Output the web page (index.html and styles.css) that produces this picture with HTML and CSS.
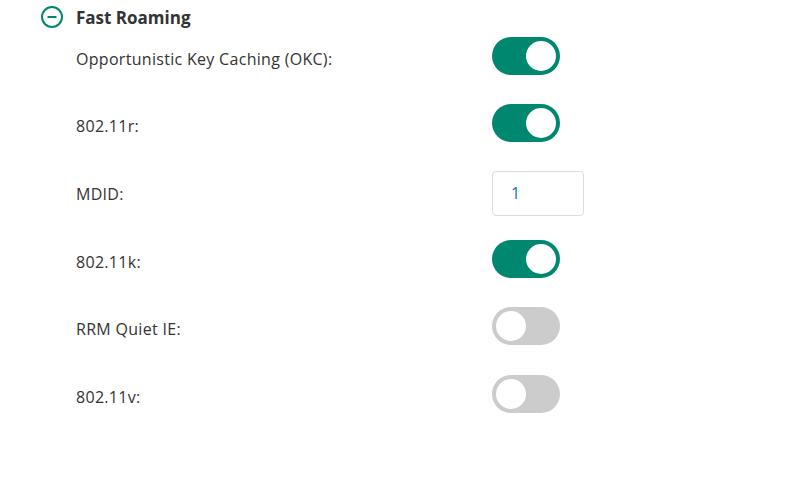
FILE: index.html
```html
<!DOCTYPE html>
<html lang="en">
<head>
  <meta charset="UTF-8" />
  <meta name="viewport" content="width=device-width, initial-scale=1.0" />
  <title>Fast Roaming</title>
  <link rel="stylesheet" href="styles.css">
</head>
<body>

  <!-- Section header -->
  <div class="section-head">
    <svg class="collapse-icon" width="24" height="24" viewBox="0 0 24 24">
      <circle cx="12" cy="12" r="10" fill="none" stroke="#00876f" stroke-width="2" />
      <line x1="7.5" y1="12" x2="16.5" y2="12" stroke="#00876f" stroke-width="2" />
    </svg>
    <span class="section-title">Fast Roaming</span>
  </div>

  <div class="rows">
    <div class="row">
      <label>Opportunistic Key Caching (OKC):</label>
      <span class="toggle on"><span class="knob"></span></span>
    </div>
    <div class="row">
      <label>802.11r:</label>
      <span class="toggle on"><span class="knob"></span></span>
    </div>
    <div class="row">
      <label>MDID:</label>
      <input type="text" value="1" class="field" />
    </div>
    <div class="row">
      <label>802.11k:</label>
      <span class="toggle on"><span class="knob"></span></span>
    </div>
    <div class="row">
      <label>RRM Quiet IE:</label>
      <span class="toggle"><span class="knob"></span></span>
    </div>
    <div class="row">
      <label>802.11v:</label>
      <span class="toggle"><span class="knob"></span></span>
    </div>
  </div>

</body>
</html>
```

FILE: styles.css
```css
body {
  margin: 0;
  font-family: "Open Sans", "Noto Sans", sans-serif;
  color: #333;
  background: #fff;
}
.section-head {
  display: flex;
  align-items: center;
  height: 34px;
  padding-left: 40px;
}
.collapse-icon {
  display: block;
}
.section-title {
  margin-left: 12px;
  font-size: 17px;
  font-weight: 700;
  color: #333;
}
.rows {
  margin-top: -12px;
  padding-left: 76px;
}
.row {
  display: grid;
  grid-template-columns: 416px auto;
  align-items: center;
  height: 67.6px;
}
.row label {
  padding-top: 6px;
  font-size: 16px;
  letter-spacing: 0.3px;
  color: #333;
}
.toggle {
  position: relative;
  display: block;
  width: 68px;
  height: 38px;
  border-radius: 19px;
  background: #cccccc;
}
.toggle.on {
  background: #00876f;
}
.knob {
  position: absolute;
  top: 4px;
  left: 4px;
  width: 30px;
  height: 30px;
  border-radius: 50%;
  background: #fff;
}
.toggle.on .knob {
  left: 34px;
}
.field {
  box-sizing: border-box;
  width: 92px;
  height: 45px;
  margin-top: 5px;
  padding: 0 18px;
  border: 1px solid #dcdcdc;
  border-radius: 4px;
  font-family: inherit;
  font-size: 16px;
  color: #1f6fae;
  outline: none;
}
```
